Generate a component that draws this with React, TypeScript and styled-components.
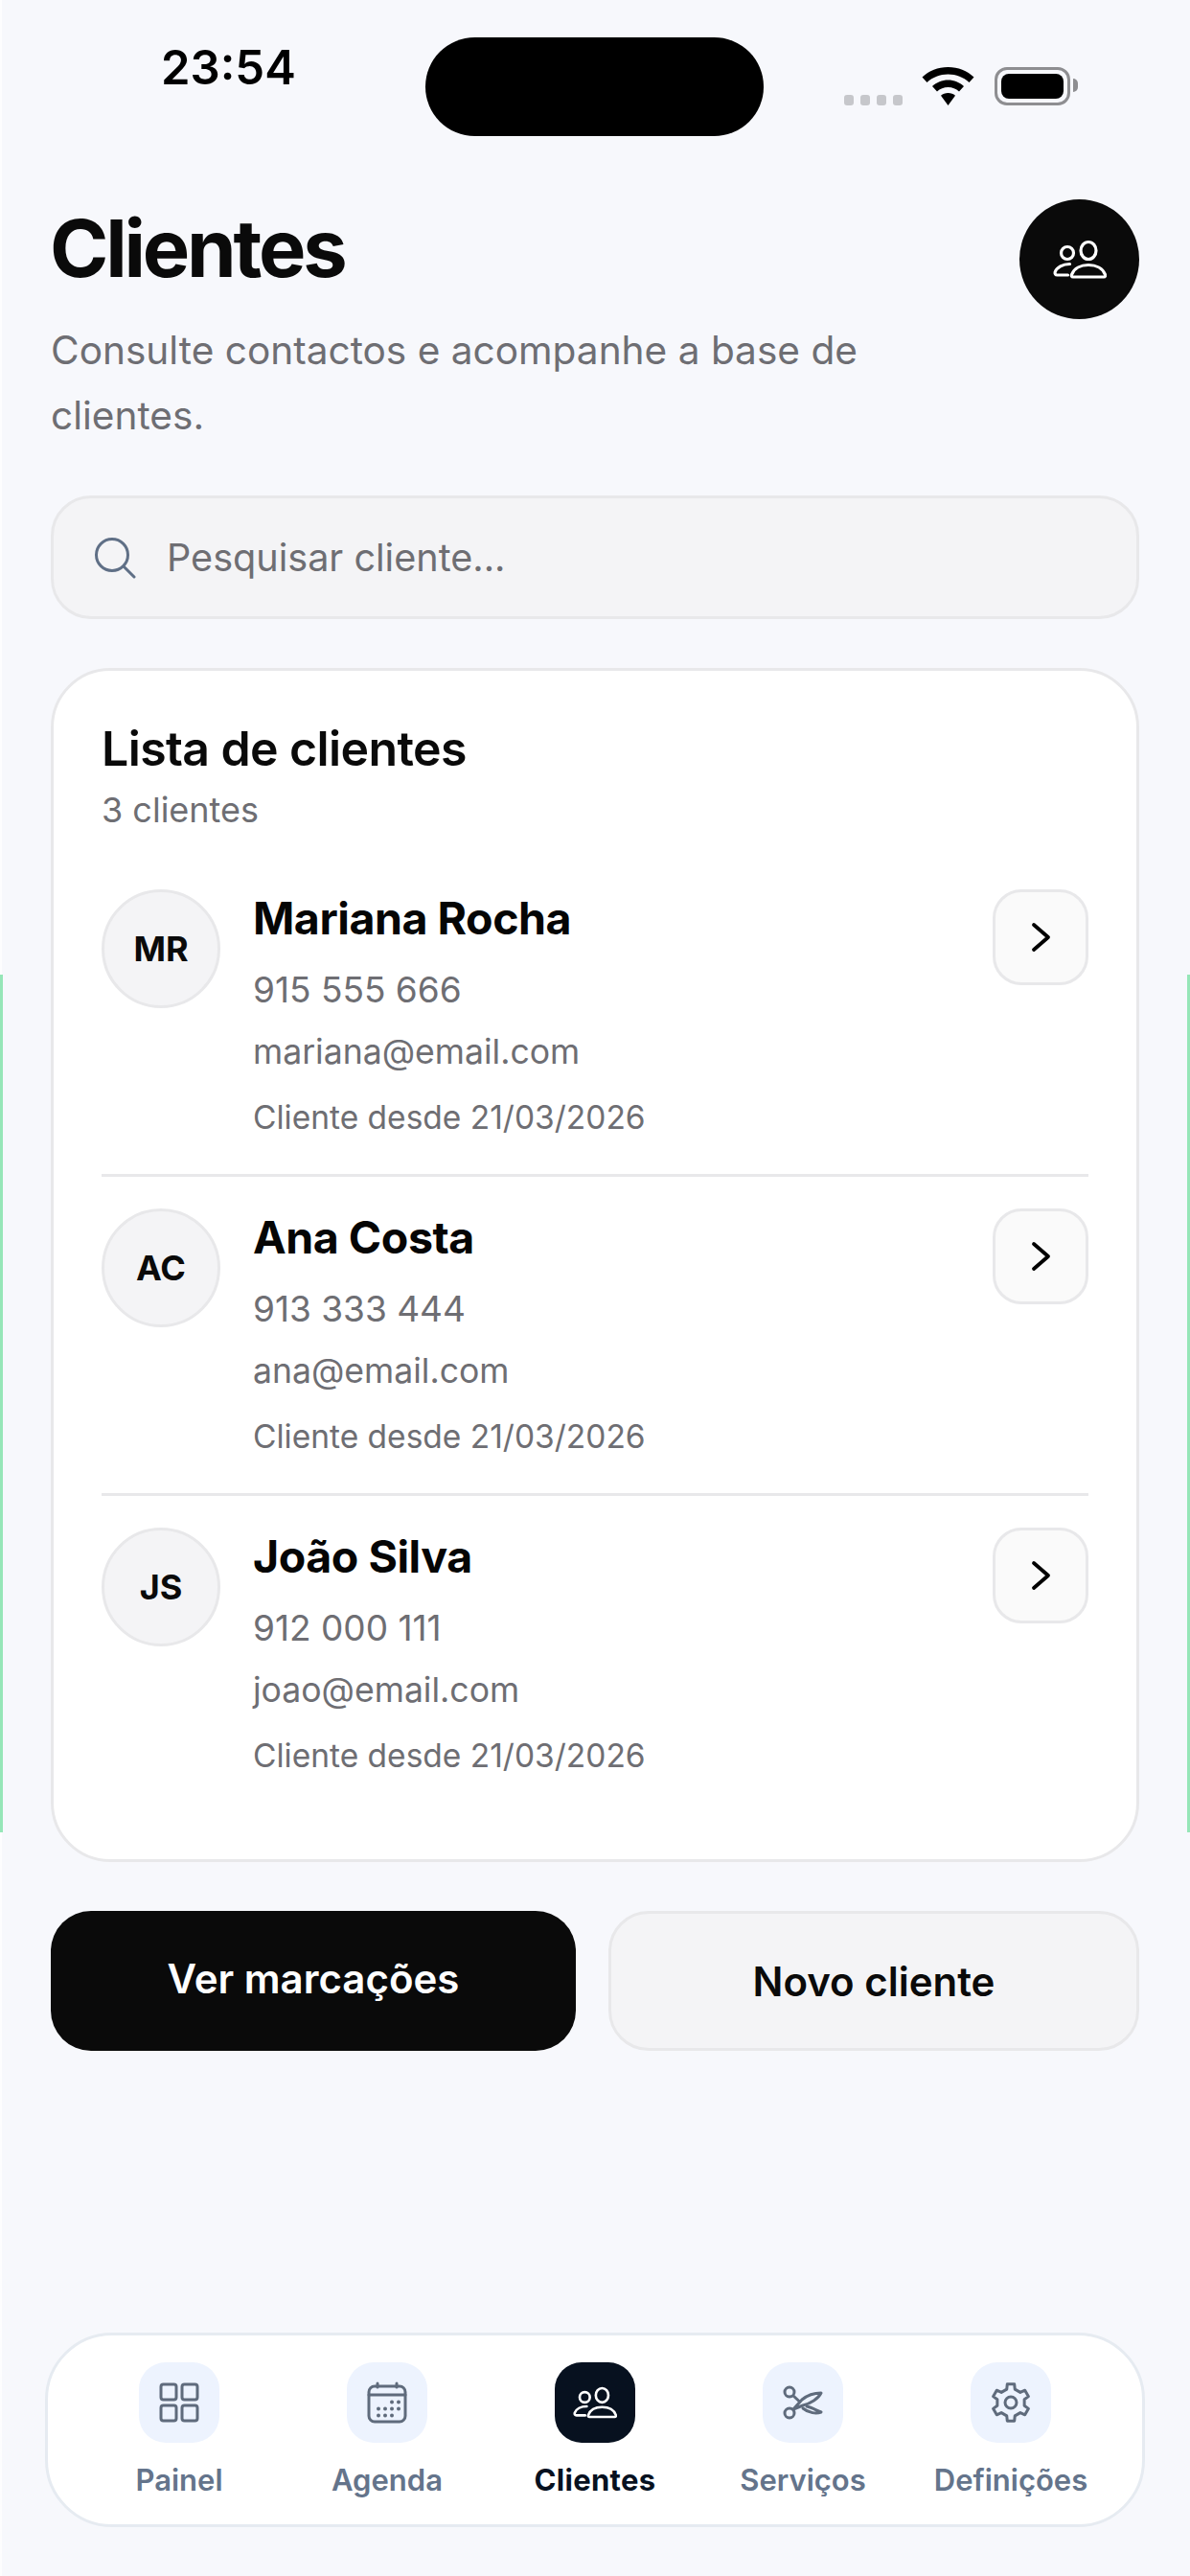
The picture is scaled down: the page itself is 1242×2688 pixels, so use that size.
import * as React from 'react';
import styled, { createGlobalStyle } from 'styled-components';

const GlobalStyle = createGlobalStyle`
  html, body {
    margin: 0;
    padding: 0;
    background: #f7f8fc;
  }
  * {
    box-sizing: border-box;
  }
`;

const clients = [
  { initials: 'MR', name: 'Mariana Rocha', phone: '915 555 666', email: 'mariana@email.com', since: '21/03/2026' },
  { initials: 'AC', name: 'Ana Costa', phone: '913 333 444', email: 'ana@email.com', since: '21/03/2026' },
  { initials: 'JS', name: 'João Silva', phone: '912 000 111', email: 'joao@email.com', since: '21/03/2026' },
];

// six teeth gear outline, centre 24,24
const gearPath = () => {
  const pt = (r: number, deg: number) => {
    const a = (deg * Math.PI) / 180;
    return `${(24 + r * Math.cos(a)).toFixed(2)} ${(24 + r * Math.sin(a)).toFixed(2)}`;
  };
  let d = '';
  for (let i = 0; i < 6; i++) {
    const c = -90 + i * 60;
    d += `${i === 0 ? 'M' : 'L'}${pt(14.5, c - 17)} L${pt(19.5, c - 11)} L${pt(19.5, c + 11)} L${pt(14.5, c + 17)} `;
  }
  return d + 'Z';
};

const PeopleIcon = ({ size }: { size: number }) => (
  <svg width={size} height={(size * 42) / 56} viewBox="0 0 56 42" fill="none" stroke="currentColor" strokeWidth="3.2" strokeLinecap="round" strokeLinejoin="round">
    <ellipse cx="37" cy="11.5" rx="8" ry="9" />
    <circle cx="15" cy="14" r="6.5" />
    <path d="M21 39C19.5 39 19 38 19.6 36.4 22 30 29 26.5 37 26.5S52 30 54.4 36.4C55 38 54.500 39 53 39Z" />
    <path d="M17.500 25.500C10 25.500 4 29 2.200 33.800 1.700 35.500 2.500 37 4.500 37H15.500" />
  </svg>
);

const GridIcon = () => (
  <svg width="42" height="42" viewBox="0 0 42 42" fill="none" stroke="currentColor" strokeWidth="3">
    <rect x="2" y="2" width="16" height="16" rx="2.500" />
    <rect x="24" y="2" width="16" height="16" rx="2.500" />
    <rect x="2" y="24" width="16" height="16" rx="2.500" />
    <rect x="24" y="24" width="16" height="16" rx="2.500" />
  </svg>
);

const CalendarIcon = () => (
  <svg width="42" height="44" viewBox="0 0 42 44" fill="none" stroke="currentColor" strokeWidth="3" strokeLinecap="round">
    <rect x="2" y="5" width="38" height="37" rx="6" />
    <path d="M2 14H40M11 2V6M31 2V6" />
    <g fill="currentColor" stroke="none">
      <circle cx="26" cy="21.500" r="2" />
      <circle cx="33" cy="21.500" r="2" />
      <circle cx="12" cy="28.500" r="2" />
      <circle cx="19" cy="28.500" r="2" />
      <circle cx="26" cy="28.500" r="2" />
      <circle cx="33" cy="28.500" r="2" />
      <circle cx="12" cy="35.500" r="2" />
      <circle cx="19" cy="35.500" r="2" />
      <circle cx="26" cy="35.500" r="2" />
    </g>
  </svg>
);

const ScissorsIcon = () => (
  <svg width="42" height="40" viewBox="0 0 42 40" fill="none" stroke="currentColor" strokeWidth="3" strokeLinejoin="round" strokeLinecap="round">
    <circle cx="7" cy="9" r="5" />
    <circle cx="7" cy="31" r="5" />
    <path d="M11 27L20 17C26 12 33 10 40 10 37 16 29 21 21 23Z" />
    <path d="M11 13L17.500 19M25 24C30 25 35 28 40 30 35 32 27 31 21 26" />
  </svg>
);

const GearIcon = () => (
  <svg width="44" height="44" viewBox="2 2 44 44" fill="none" stroke="currentColor" strokeWidth="3" strokeLinejoin="round">
    <path d={gearPath()} />
    <circle cx="24" cy="24" r="6" />
  </svg>
);

const navItems = [
  { label: 'Painel', icon: <GridIcon /> },
  { label: 'Agenda', icon: <CalendarIcon /> },
  { label: 'Clientes', icon: <PeopleIcon size={46} />, active: true },
  { label: 'Serviços', icon: <ScissorsIcon /> },
  { label: 'Definições', icon: <GearIcon /> },
];

export default function App() {
  return (
    <>
      <GlobalStyle />
      <Page>
        <EdgeStripe $side="left" />
        <EdgeStripe $side="right" />
        <StatusBar>
          <Time>23:54</Time>
          <Island />
          <StatusIcons>
            <SignalDots>
              <i />
              <i />
              <i />
              <i />
            </SignalDots>
            <svg width="55" height="40" viewBox="0 0 55 40" fill="#000">
              <path d="M27.500 0C38 0 47.500 4 54.500 10.500L49.500 16C43.500 10.500 36 7.500 27.500 7.500S11.500 10.500 5.500 16L0.500 10.500C7.500 4 17 0 27.500 0Z" />
              <path d="M27.500 13.500C33.800 13.500 39.500 16 44 20L39 25.500C35.800 22.700 32 21 27.500 21S19.200 22.700 16 25.500L11 20C15.500 16 21.200 13.500 27.500 13.500Z" />
              <path d="M27.500 27C30.500 27 33 28 35 29.800L27.500 40 20 29.800C22 28 24.500 27 27.500 27Z" />
            </svg>
            <Battery>
              <BatteryFill />
              <BatteryNub />
            </Battery>
          </StatusIcons>
        </StatusBar>

        <Header>
          <HeaderText>
            <Title>Clientes</Title>
            <Subtitle>Consulte contactos e acompanhe a base de clientes.</Subtitle>
          </HeaderText>
          <HeaderBadge>
            <PeopleIcon size={56} />
          </HeaderBadge>
        </Header>

        <SearchBox>
          <svg width="44" height="44" viewBox="0 0 44 44" fill="none" stroke="#5f6f86" strokeWidth="3" strokeLinecap="round">
            <circle cx="19" cy="19" r="16.500" />
            <path d="M31 31L42 42" />
          </svg>
          <SearchText>Pesquisar cliente...</SearchText>
        </SearchBox>

        <Card>
          <CardTitle>Lista de clientes</CardTitle>
          <CardCount>3 clientes</CardCount>
          <ClientList>
            {clients.map(c => (
              <ClientRow key={c.initials}>
                <Avatar>{c.initials}</Avatar>
                <ClientInfo>
                  <ClientName>{c.name}</ClientName>
                  <ClientPhone>{c.phone}</ClientPhone>
                  <ClientEmail>{c.email}</ClientEmail>
                  <ClientSince>Cliente desde {c.since}</ClientSince>
                </ClientInfo>
                <ArrowButton>
                  <svg width="22" height="32" viewBox="0 0 22 32" fill="none" stroke="#000" strokeWidth="3.800" strokeLinecap="round" strokeLinejoin="round">
                    <path d="M4 3L19 16 4 29" />
                  </svg>
                </ArrowButton>
              </ClientRow>
            ))}
          </ClientList>
        </Card>

        <Actions>
          <PrimaryButton>Ver marcações</PrimaryButton>
          <SecondaryButton>Novo cliente</SecondaryButton>
        </Actions>

        <BottomNav>
          {navItems.map(item => (
            <NavItem key={item.label}>
              <NavTile $active={item.active}>{item.icon}</NavTile>
              <NavLabel $active={item.active}>{item.label}</NavLabel>
            </NavItem>
          ))}
        </BottomNav>
      </Page>
    </>
  );
}

const Page = styled.div`
  position: relative;
  display: flex;
  flex-direction: column;
  width: 1242px;
  height: 2688px;
  padding: 0 53px 51px 53px;
  background: #f7f8fc;
  box-shadow: inset 2px 0 0 #fdfdfe;
  font-family: Inter, 'Noto Sans', sans-serif;
  overflow: hidden;
`;

const EdgeStripe = styled.div<{ $side: 'left' | 'right' }>`
  position: absolute;
  top: 1017px;
  ${p => p.$side}: 0;
  width: 3px;
  height: 895px;
  background: #96e6b8;
`;

const StatusBar = styled.div`
  display: grid;
  grid-template-columns: 391px 353px 1fr;
  height: 208px;
  padding-top: 39px;
`;

const Time = styled.div`
  padding: 1px 0 0 115px;
  font-size: 49px;
  line-height: 62px;
  font-weight: 600;
  color: #000;
`;

const Island = styled.div`
  width: 353px;
  height: 103px;
  border-radius: 52px;
  background: #000;
`;

const StatusIcons = styled.div`
  display: flex;
  align-items: flex-end;
  gap: 20px;
  height: 71px;
  padding-left: 84px;
`;

const SignalDots = styled.div`
  display: flex;
  gap: 7px;
  i {
    display: block;
    width: 10px;
    height: 11px;
    border-radius: 3px;
    background: #c6c7cb;
  }
`;

const Battery = styled.div`
  position: relative;
  width: 79px;
  height: 40px;
  margin-left: 1px;
  padding: 4px;
  border: 3px solid #8e8e91;
  border-radius: 13px;
`;

const BatteryFill = styled.div`
  width: 100%;
  height: 100%;
  border-radius: 8px;
  background: #000;
`;

const BatteryNub = styled.div`
  position: absolute;
  top: 9px;
  right: -11px;
  width: 5px;
  height: 14px;
  border-radius: 0 5px 5px 0;
  background: #8e8e91;
`;

const Header = styled.div`
  display: flex;
  justify-content: space-between;
  align-items: flex-start;
`;

const HeaderText = styled.div`
  width: 900px;
`;

const Title = styled.h1`
  margin: 0 0 0 -1px;
  font-size: 83px;
  line-height: 102px;
  font-weight: 700;
  letter-spacing: -3.2px;
  color: #0a0a0a;
`;

const Subtitle = styled.p`
  margin: 22px 0 -1px;
  font-size: 40.6px;
  line-height: 68px;
  font-weight: 400;
  color: #6e6e73;
`;

const HeaderBadge = styled.div`
  display: flex;
  align-items: center;
  justify-content: center;
  flex: none;
  width: 125px;
  height: 125px;
  border-radius: 50%;
  background: #0a0a0a;
  color: #fff;
`;

const SearchBox = styled.div`
  display: flex;
  align-items: center;
  gap: 32px;
  height: 129px;
  margin-top: 50px;
  padding: 0 43px 0 42px;
  border: 3px solid #e8e8ea;
  border-radius: 42px;
  background: #f4f4f6;
`;

const SearchText = styled.span`
  font-size: 39.6px;
  color: #6e6e73;
`;

const Card = styled.section`
  margin-top: 51px;
  padding: 51px 50px 49px;
  border: 3px solid #e8e8ea;
  border-radius: 62px;
  background: #fff;
`;

const CardTitle = styled.h2`
  margin: 0;
  font-size: 50px;
  line-height: 60px;
  font-weight: 600;
  letter-spacing: -0.6px;
  color: #0a0a0a;
`;

const CardCount = styled.div`
  margin-top: 14px;
  font-size: 36px;
  line-height: 40px;
  color: #6e6e73;
`;

const ClientList = styled.div`
  margin-top: 63px;
`;

const ClientRow = styled.div`
  display: grid;
  grid-template-columns: 124px 1fr 100px;
  column-gap: 34px;
  align-items: start;
  padding-bottom: 34px;
  border-bottom: 3px solid #e8e8ea;
  margin-bottom: 33px;
  &:last-child {
    border-bottom: 0;
    margin-bottom: 0;
  }
`;

const Avatar = styled.div`
  display: flex;
  align-items: center;
  justify-content: center;
  width: 124px;
  height: 124px;
  border: 3px solid #e8e8ea;
  border-radius: 50%;
  background: #f4f4f6;
  font-size: 36px;
  font-weight: 700;
  color: #0a0a0a;
`;

const ClientInfo = styled.div`
  display: flex;
  flex-direction: column;
  min-width: 0;
`;

const ClientName = styled.div`
  font-size: 46.5px;
  line-height: 60px;
  font-weight: 700;
  letter-spacing: -0.45px;
  color: #050505;
`;

const ClientPhone = styled.div`
  margin-top: 20px;
  font-size: 37px;
  line-height: 50px;
  color: #6e6e73;
`;

const ClientEmail = styled.div`
  margin-top: 15px;
  font-size: 35.6px;
  line-height: 50px;
  color: #6e6e73;
`;

const ClientSince = styled.div`
  margin-top: 18px;
  font-size: 33.5px;
  line-height: 50px;
  color: #6e6e73;
`;

const ArrowButton = styled.div`
  display: flex;
  align-items: center;
  justify-content: center;
  width: 100px;
  height: 100px;
  border: 3px solid #e8e8ea;
  border-radius: 30px;
  background: #fafafa;
`;

const Actions = styled.div`
  display: grid;
  grid-template-columns: 548px 1fr;
  column-gap: 34px;
  margin-top: 51px;
`;

const PrimaryButton = styled.div`
  display: flex;
  align-items: center;
  justify-content: center;
  height: 146px;
  padding-bottom: 6px;
  border-radius: 42px;
  background: #0a0a0a;
  color: #fff;
  font-size: 42px;
  font-weight: 600;
`;

const SecondaryButton = styled.div`
  display: flex;
  align-items: center;
  justify-content: center;
  height: 146px;
  border: 3px solid #e8e8ea;
  border-radius: 42px;
  background: #f4f4f6;
  color: #0a0a0a;
  font-size: 42px;
  font-weight: 600;
`;

const BottomNav = styled.nav`
  display: grid;
  grid-template-columns: repeat(5, 217px);
  justify-content: center;
  height: 203px;
  margin: auto -6px 0 -6px;
  padding-top: 28px;
  border: 3px solid #e6ebf1;
  border-radius: 70px;
  background: #fff;
`;

const NavItem = styled.div`
  display: flex;
  flex-direction: column;
  align-items: center;
`;

const NavTile = styled.div<{ $active?: boolean }>`
  display: flex;
  align-items: center;
  justify-content: center;
  width: 84px;
  height: 84px;
  border-radius: 28px;
  background: ${p => (p.$active ? '#07111f' : '#edf3fe')};
  color: ${p => (p.$active ? '#fff' : '#5f6b7c')};
`;

const NavLabel = styled.div<{ $active?: boolean }>`
  margin-top: 20px;
  font-size: 31px;
  line-height: 38px;
  font-weight: ${p => (p.$active ? 700 : 600)};
  letter-spacing: ${p => (p.$active ? '0.3px' : '0')};
  color: ${p => (p.$active ? '#07111f' : '#64748b')};
`;
